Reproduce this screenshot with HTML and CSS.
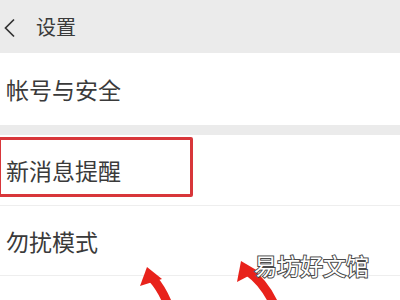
FILE: index.html
```html
<!DOCTYPE html>
<html lang="zh">
<head>
<meta charset="utf-8">
<link rel="stylesheet" href="styles.css">
</head>
<body>
<div class="page">
  <header class="header">
    <svg class="back" width="14" height="20" viewBox="0 0 14 20"><path d="M12 1.5 L3.5 10 L12 18.5" fill="none" stroke="#333" stroke-width="1.7"/></svg>
    <span class="title">设置</span>
  </header>
  <div class="row">帐号与安全</div>
  <div class="gap"></div>
  <div class="row row-hl"><span>新消息提醒</span><div class="hl-box"></div></div>
  <div class="row row-sep">勿扰模式</div>
  <div class="row row-sep"></div>
  <svg class="arrows" width="400" height="300" viewBox="0 0 400 300">
    <path d="M167 302 Q161 288 153 279" fill="none" stroke="#e8221b" stroke-width="9"/>
    <polygon points="147,267 140,286 162,279" fill="#e8221b"/>
    <path d="M273 302 Q263 282 249 272" fill="none" stroke="#e8221b" stroke-width="9"/>
    <polygon points="241,261 237,282 258,271" fill="#e8221b"/>
  </svg>
  <div class="watermark">易坊好文馆</div>
</div>
</body>
</html>
```
FILE: styles.css
```css
html, body {
  margin: 0;
  padding: 0;
}
body {
  width: 400px;
  height: 300px;
  overflow: hidden;
  background: #ffffff;
  font-family: "Noto Sans CJK SC", "Noto Sans", sans-serif;
  color: #3a3a3a;
}
.page {
  position: relative;
  width: 400px;
  height: 300px;
  overflow: hidden;
}
.header {
  height: 53px;
  background: #ebebeb;
  display: flex;
  align-items: center;
  padding-left: 2px;
  box-sizing: border-box;
}
.back {
  display: block;
  margin-top: 2px;
}
.title {
  margin-left: 20px;
  font-size: 20px;
  line-height: 1;
}
.row {
  position: relative;
  height: 72px;
  background: #fff;
  display: flex;
  align-items: center;
  padding-left: 6px;
  font-size: 23px;
  box-sizing: border-box;
}
.row-hl {
  height: 70px;
}
.row-sep {
  border-top: 1px solid #eeeeee;
  height: 70px;
}
.gap {
  height: 10px;
  background: #ebebeb;
}
.hl-box {
  position: absolute;
  left: -2px;
  top: 2px;
  width: 195px;
  height: 60px;
  box-sizing: border-box;
  border: 3px solid #d8363a;
  border-radius: 2px;
}
.arrows {
  position: absolute;
  left: 0;
  top: 0;
}
.watermark {
  position: absolute;
  left: 254px;
  top: 252px;
  font-size: 23px;
  line-height: 1.2;
  color: #fff;
  -webkit-text-stroke: 2px #4a4a4a;
  paint-order: stroke fill;
}
```
